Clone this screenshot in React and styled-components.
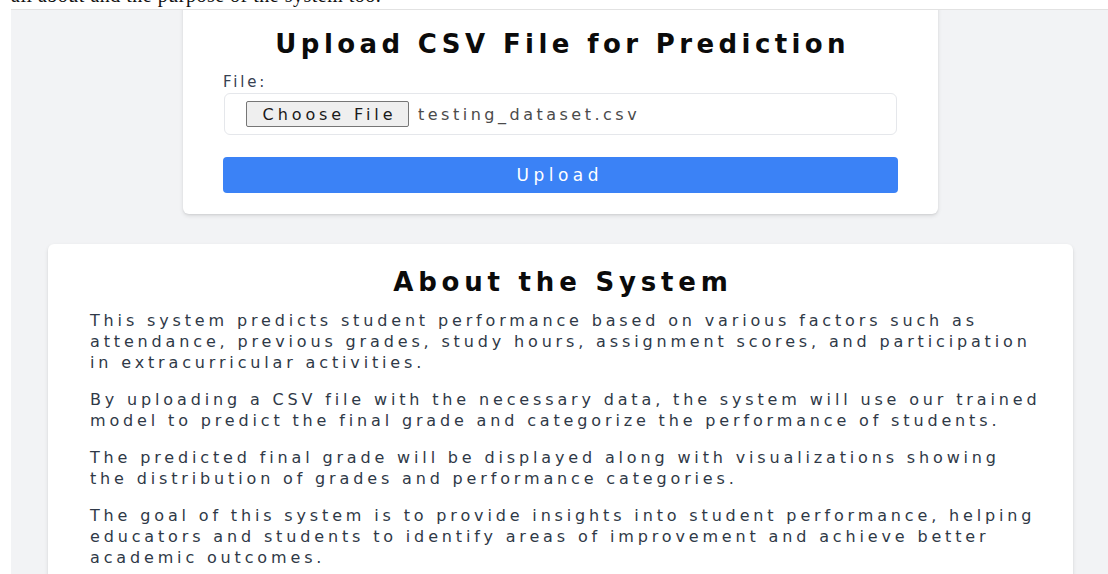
import styled, { createGlobalStyle } from 'styled-components';

const GlobalStyle = createGlobalStyle`
  html, body {
    margin: 0;
    padding: 0;
    background: #ffffff;
    overflow: hidden;
  }
  body {
    font-family: 'DejaVu Sans', 'Noto Sans', sans-serif;
  }
`;

const Page = styled.div`
  width: 1108px;
  height: 574px;
  overflow: hidden;
`;

const DocText = styled.p`
  margin: -16px 0 3px 11px;
  font-family: 'Liberation Serif', serif;
  font-size: 20px;
  line-height: 22px;
  letter-spacing: 0.5px;
  color: #111;
  white-space: nowrap;
`;

const Frame = styled.div`
  margin-left: 11px;
  width: 1099px;
  height: 600px;
  border-top: 1px solid #e2e2e2;
  background: #f2f3f5;
  overflow: hidden;
  display: flex;
  flex-direction: column;
  align-items: center;
`;

const Card = styled.div`
  background: #ffffff;
  border-radius: 6px;
  box-shadow: 0 2px 4px rgba(0, 0, 0, 0.1), 0 1px 2px rgba(0, 0, 0, 0.06);
  box-sizing: border-box;
`;

const UploadCard = styled(Card)`
  width: 755px;
  margin-top: -14px;
  padding: 32px 40px 21px;
`;

const AboutCard = styled(Card)`
  width: 1025px;
  margin-top: 30px;
  padding: 22px 42px 30px;
`;

const Title = styled.h2`
  margin: 0 0 ${(p) => p.$gap}px;
  padding-left: ${(p) => p.$spacing}px;
  font-size: 26px;
  line-height: 32px;
  font-weight: 700;
  letter-spacing: ${(p) => p.$spacing}px;
  text-align: center;
  color: #0b0b0b;
  white-space: nowrap;
`;

const Label = styled.label`
  display: block;
  font-size: 15px;
  line-height: 21px;
  letter-spacing: 2.8px;
  color: #374151;
`;

const FileBox = styled.div`
  display: flex;
  align-items: center;
  gap: 9px;
  margin: 0 1px;
  height: 42px;
  box-sizing: border-box;
  padding: 0 21px;
  border: 1px solid #e5e7eb;
  border-radius: 6px;
`;

const ChooseButton = styled.span`
  display: inline-flex;
  align-items: center;
  justify-content: center;
  height: 26px;
  width: 163px;
  box-sizing: border-box;
  background: #efefef;
  border: 1px solid #767676;
  border-radius: 2px;
  font-size: 16px;
  letter-spacing: 3.9px;
  padding-left: 4px;
  color: #1a1a1a;
`;

const FileName = styled.span`
  font-size: 16px;
  letter-spacing: 3.5px;
  color: #4b4b4b;
`;

const UploadButton = styled.button`
  display: block;
  width: 100%;
  height: 36px;
  margin-top: 22px;
  border: none;
  border-radius: 4px;
  background: #3b82f6;
  color: #ffffff;
  font-family: inherit;
  font-size: 17px;
  letter-spacing: 4.5px;
  padding-left: 4.5px;
`;

const Paragraph = styled.p`
  margin: 0 0 16px;
  font-size: 16px;
  line-height: 21px;
  letter-spacing: 3.85px;
  color: #2f3947;
`;

const Line = styled.span`
  display: block;
  white-space: nowrap;
`;

const about = [
  [
    'This system predicts student performance based on various factors such as',
    'attendance, previous grades, study hours, assignment scores, and participation',
    'in extracurricular activities.',
  ],
  [
    'By uploading a CSV file with the necessary data, the system will use our trained',
    'model to predict the final grade and categorize the performance of students.',
  ],
  [
    'The predicted final grade will be displayed along with visualizations showing',
    'the distribution of grades and performance categories.',
  ],
  [
    'The goal of this system is to provide insights into student performance, helping',
    'educators and students to identify areas of improvement and achieve better',
    'academic outcomes.',
  ],
];

export default function App() {
  return (
    <Page>
      <GlobalStyle />
      <DocText>all about and the purpose of the system too.</DocText>
      <Frame>
        <UploadCard>
          <Title $gap={12} $spacing={4.4}>
            Upload CSV File for Prediction
          </Title>
          <Label>File:</Label>
          <FileBox>
            <ChooseButton>Choose File</ChooseButton>
            <FileName>testing_dataset.csv</FileName>
          </FileBox>
          <UploadButton>Upload</UploadButton>
        </UploadCard>
        <AboutCard>
          <Title $gap={12} $spacing={4.8}>
            About the System
          </Title>
          {about.map((lines, i) => (
            <Paragraph key={i}>
              {lines.map((line) => (
                <Line key={line}>{line}</Line>
              ))}
            </Paragraph>
          ))}
        </AboutCard>
      </Frame>
    </Page>
  );
}
